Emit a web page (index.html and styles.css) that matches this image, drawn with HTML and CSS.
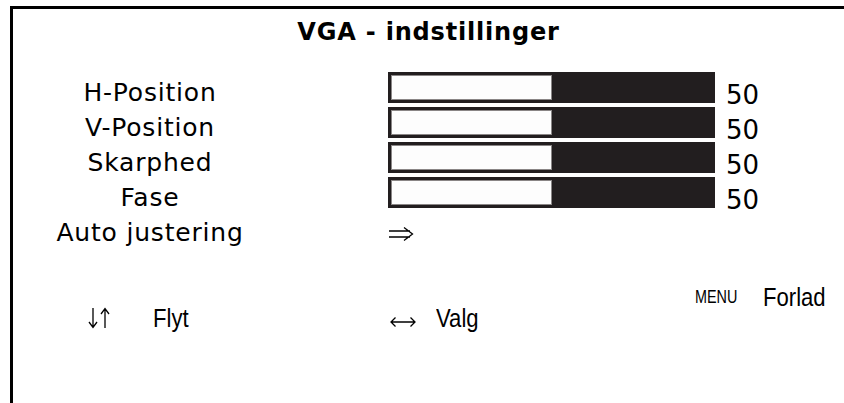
FILE: index.html
```html
<!DOCTYPE html>
<html lang="da">
<head>
    <meta charset="UTF-8">
    <meta name="viewport" content="width=device-width, initial-scale=1.0">
    <title>VGA - indstillinger</title>
    <link rel="stylesheet" href="styles.css">
</head>
<body>
    <div class="screen">
        <h1 class="title">VGA - indstillinger</h1>

        <div class="settings">
            <div class="label">H-Position</div>
            <div class="bar"><div class="fill"></div></div>
            <div class="value">50</div>

            <div class="label">V-Position</div>
            <div class="bar"><div class="fill"></div></div>
            <div class="value">50</div>

            <div class="label">Skarphed</div>
            <div class="bar"><div class="fill"></div></div>
            <div class="value">50</div>

            <div class="label">Fase</div>
            <div class="bar"><div class="fill"></div></div>
            <div class="value">50</div>

            <div class="label label-auto">Auto justering</div>
            <div class="arrow">
                <!-- double right arrow -->
                <svg width="26" height="16" viewBox="0 0 26 16" fill="none" stroke="#000" stroke-width="1.3">
                    <path d="M1 5h21M1 11h21M16 1.5L24.5 8 16 14.5"/>
                </svg>
            </div>
            <div></div>
        </div>

        <div class="footer">
            <div class="hint hint-move">
                <span class="keys keys-move">
                    <!-- down / up arrows -->
                    <svg width="24" height="22" viewBox="0 0 24 22" fill="none" stroke="#000" stroke-width="1.3">
                        <path d="M5 1v19M1 15l4 5.5 4-5.5"/>
                        <path d="M17 21V2M13 7l4-5.5 4 5.5"/>
                    </svg>
                </span><span class="hint-text">Flyt</span>
            </div>
            <div class="hint hint-select">
                <span class="keys keys-select">
                    <svg width="26" height="12" viewBox="0 0 26 12" fill="none" stroke="#000" stroke-width="1.3">
                        <path d="M1 6h24M5.5 1.5L1 6l4.5 4.5M20.5 1.5L25 6l-4.5 4.5"/>
                    </svg>
                </span><span class="hint-text">Valg</span>
            </div>
            <div class="hint hint-exit"><span class="menu-key">MENU</span><span class="hint-text">Forlad</span></div>
        </div>
    </div>
</body>
</html>
```

FILE: styles.css
```css
body {
    margin: 0;
    background-color: #fff;
    color: #000;
    font-family: "DejaVu Sans", Verdana, sans-serif;
    overflow: hidden;
}
.screen {
    margin: 6px 0 0 10px;
    height: 397px;
    border-top: 3px solid #000;
    border-left: 3px solid #000;
    box-sizing: border-box;
}
.title {
    margin: 0;
    padding-top: 9px;
    height: 63px;
    box-sizing: border-box;
    text-align: center;
    font-size: 24px;
    letter-spacing: 0.8px;
    line-height: 28px;
    font-weight: bold;
}
.settings {
    display: grid;
    grid-template-columns: 274px 101px 327px auto;
    grid-auto-rows: 35px;
}
.label {
    grid-column: 1;
    text-align: center;
    font-size: 25px;
    letter-spacing: 0.8px;
    line-height: 30px;
    padding-top: 6px;
}
.bar {
    grid-column: 3;
    height: 31px;
    background-color: #221e1f;
    padding: 3px 0 3px 3px;
    box-sizing: border-box;
}
.fill {
    width: 161px;
    height: 100%;
    background-color: #fdfdfd;
    border: 1px solid #8a8686;
    box-sizing: border-box;
}
.value {
    padding-left: 11px;
    font-size: 26px;
    line-height: 30px;
    padding-top: 8px;
}
.label-auto {
    padding-top: 6px;
}
.arrow {
    grid-column: 3;
    padding-top: 14px;
}
.arrow svg {
    display: block;
}
.footer {
    display: flex;
    margin-top: 34px;
    font-family: "Liberation Sans", Arial, sans-serif;
    font-size: 26px;
}
.hint {
    display: flex;
    align-items: flex-end;
    height: 30px;
    white-space: nowrap;
}
.hint-text {
    display: inline-block;
    line-height: 30px;
    transform: scaleX(0.85);
    transform-origin: left;
}
.hint-move {
    width: 302px;
    padding-left: 75px;
    margin-top: 22px;
}
.hint-select {
    width: 305px;
    margin-top: 22px;
}
.hint-exit {
    margin-top: 1px;
}
.keys {
    display: inline-block;
}
.keys svg {
    display: block;
}
.keys-move {
    width: 65px;
    padding-bottom: 4px;
}
.keys-select {
    width: 46px;
    padding-bottom: 5px;
}
.menu-key {
    display: inline-block;
    width: 68px;
    font-size: 18px;
    line-height: 30px;
    transform: scaleX(0.8);
    transform-origin: left;
}
```
